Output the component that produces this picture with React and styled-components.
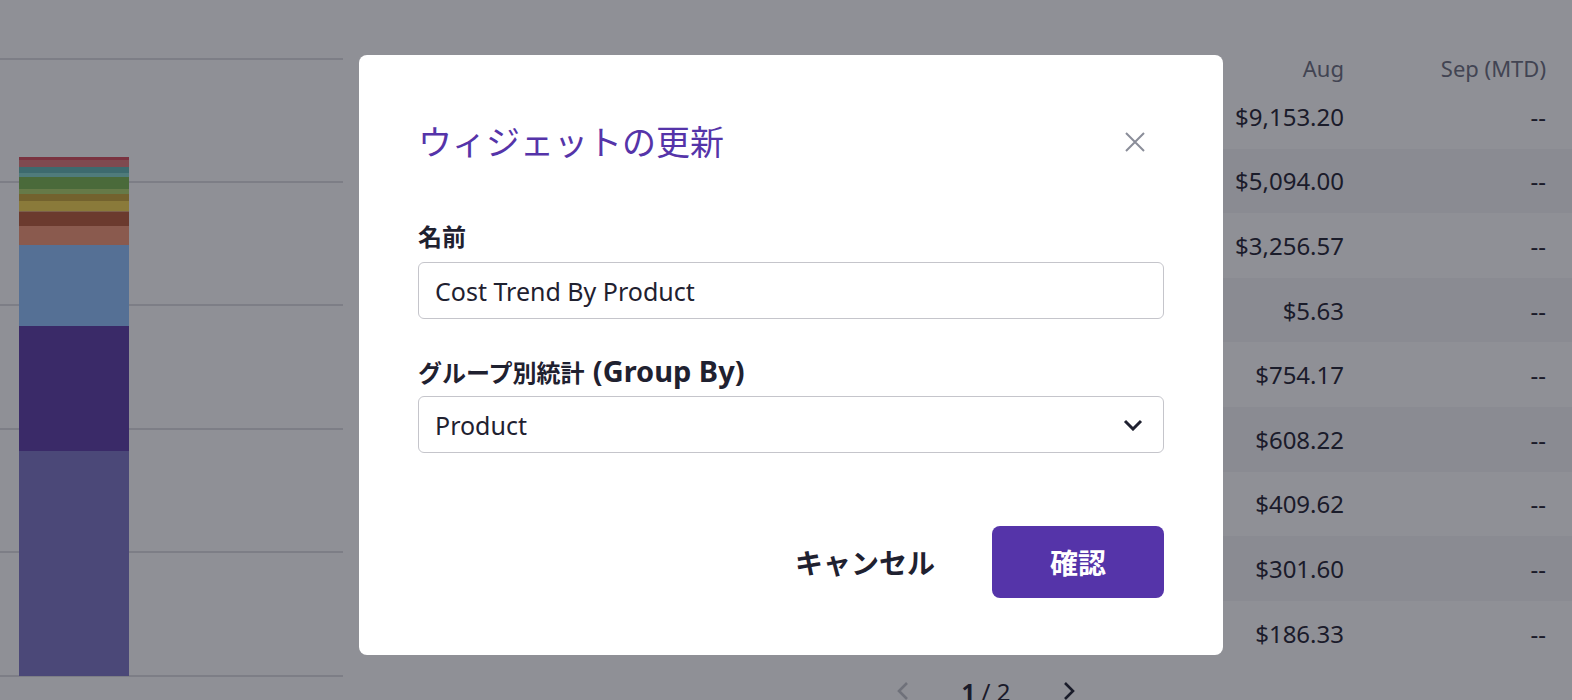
import React from 'react';
import styled, { createGlobalStyle } from 'styled-components';

const GlobalStyle = createGlobalStyle`
  * { box-sizing: border-box; }
  html, body {
    margin: 0;
    padding: 0;
    height: 700px;
    overflow: hidden;
    background: #ffffff;
  }
  body {
    font-family: "Noto Sans", "Noto Sans CJK JP", sans-serif;
    color: #1f2130;
  }
`;

const rows = [
  { product: 'Amazon EC2', jun: '$8,842.11', jul: '$9,010.45', aug: '$9,153.20' },
  { product: 'Amazon RDS', jun: '$4,980.00', jul: '$5,040.00', aug: '$5,094.00' },
  { product: 'Amazon S3', jun: '$3,102.88', jul: '$3,190.04', aug: '$3,256.57' },
  { product: 'AWS Support', jun: '$5.12', jul: '$5.40', aug: '$5.63' },
  { product: 'Amazon CloudFront', jun: '$702.33', jul: '$731.90', aug: '$754.17' },
  { product: 'Elastic Load Balancing', jun: '$590.10', jul: '$601.74', aug: '$608.22' },
  { product: 'Amazon VPC', jun: '$398.20', jul: '$404.51', aug: '$409.62' },
  { product: 'Amazon CloudWatch', jun: '$288.45', jul: '$296.13', aug: '$301.60' },
  { product: 'AWS Lambda', jun: '$170.02', jul: '$180.77', aug: '$186.33' },
];

// stacked bar, y ranges in page pixels
const segments = [
  { y0: 157, y1: 160, color: '#d74d5a' },
  { y0: 160, y1: 167, color: '#e17979' },
  { y0: 167, y1: 173, color: '#62b7b2' },
  { y0: 173, y1: 177, color: '#85d7cb' },
  { y0: 177, y1: 189, color: '#7bb74f' },
  { y0: 189, y1: 194, color: '#b1d56a' },
  { y0: 194, y1: 201, color: '#caa738' },
  { y0: 201, y1: 211.5, color: '#f6d54f' },
  { y0: 211.5, y1: 226, color: '#ba5b38' },
  { y0: 226, y1: 245, color: '#f69875' },
  { y0: 245, y1: 326, color: '#90c2fd' },
  { y0: 326, y1: 451, color: '#5d3ca7' },
  { y0: 451, y1: 676, color: '#7d76c5' },
];

const gridLines = [59, 182, 305, 429, 552, 676];

const Page = styled.div`
  display: flex;
  height: 700px;
  overflow: hidden;
`;

const ChartPanel = styled.div`
  width: 400px;
  flex-shrink: 0;
`;

const TablePanel = styled.div`
  flex: 1;
  display: flex;
  flex-direction: column;
  padding-top: 52px;
`;

const TableRow = styled.div`
  display: grid;
  grid-template-columns: 1fr repeat(4, 202px);
  align-items: center;
  flex-shrink: 0;
  padding-right: 26px;
  height: ${p => (p.$head ? '32px' : '64.6px')};
  background: ${p => (p.$striped ? '#f5f5f8' : 'transparent')};
  font-size: ${p => (p.$head ? '22px' : '24px')};
  color: ${p => (p.$head ? '#6b6e7e' : '#1f2130')};
`;

const Cell = styled.div`
  text-align: ${p => (p.$left ? 'left' : 'right')};
  padding-left: ${p => (p.$left ? '24px' : '0')};
  white-space: nowrap;
`;

const Pager = styled.div`
  display: flex;
  flex-shrink: 0;
  align-items: center;
  justify-content: center;
  height: 40px;
  margin-top: 6px;
  font-size: 24px;
  color: #1f2130;
`;

const PagerArrow = styled.span`
  display: flex;
  width: 12px;
  color: ${p => (p.$disabled ? '#c2c3c9' : '#1f2130')};
`;

const PagerText = styled.span`
  margin: 0 53px;
  b { font-weight: 700; }
`;

const Backdrop = styled.div`
  position: fixed;
  inset: 0;
  background: rgba(20, 22, 35, 0.477);
  display: flex;
  justify-content: center;
  align-items: flex-start;
  padding: 55px 0 0 10px;
`;

const Dialog = styled.div`
  width: 864px;
  background: #ffffff;
  border-radius: 8px;
  padding: 58px 59px 57px;
  display: flex;
  flex-direction: column;
`;

const DialogHeader = styled.div`
  display: flex;
  align-items: center;
  justify-content: space-between;
  height: 58px;
`;

const Title = styled.h2`
  margin: 0;
  font-size: 34px;
  font-weight: 400;
  color: #5534a9;
  line-height: 58px;
`;

const CloseButton = styled.button`
  width: 40px;
  height: 40px;
  margin-right: 9px;
  border: none;
  background: none;
  padding: 0;
  display: flex;
  align-items: center;
  justify-content: center;
  color: #8a8d99;
  cursor: pointer;
`;

const Field = styled.div`
  margin-top: ${p => p.$gap}px;
`;

const Label = styled.label`
  display: block;
  height: 32px;
  font-size: 24px;
  font-weight: 700;
  line-height: 32px;
  margin-bottom: 9px;
  color: #1f2130;
  white-space: nowrap;
`;

const LabelHint = styled.span`
  font-size: 29px;
  margin-left: 2px;
`;

const TextInput = styled.input`
  display: block;
  width: 100%;
  height: 57px;
  border: 1px solid #c5c5cb;
  border-radius: 6px;
  padding: 0 16px;
  font-family: inherit;
  font-size: 25px;
  color: #1f2130;
  outline: none;
`;

const SelectBox = styled.button`
  display: flex;
  width: 100%;
  height: 57px;
  align-items: center;
  justify-content: space-between;
  border: 1px solid #c5c5cb;
  border-radius: 6px;
  padding: 0 20px 0 16px;
  background: #ffffff;
  font-family: inherit;
  font-size: 25px;
  color: #1f2130;
  cursor: pointer;
`;

const Footer = styled.div`
  display: flex;
  justify-content: flex-end;
  gap: 41px;
  margin-top: 73px;
`;

const ActionButton = styled.button`
  width: 172px;
  height: 72px;
  border: none;
  border-radius: 8px;
  font-family: "Noto Sans", "Noto Sans CJK JP", sans-serif;
  font-size: 28px;
  font-weight: 700;
  background: ${p => (p.$primary ? '#5534a9' : 'transparent')};
  color: ${p => (p.$primary ? '#ffffff' : '#1f2130')};
  cursor: pointer;
`;

function CostChart() {
  return (
    <svg width="343" height="700" viewBox="0 0 343 700">
      {gridLines.map(y => (
        <rect key={y} x="0" y={y - 1} width="343" height="2" fill="#dcdde1" />
      ))}
      {segments.map(s => (
        <rect key={s.y0} x="19" y={s.y0} width="110" height={s.y1 - s.y0} fill={s.color} />
      ))}
    </svg>
  );
}

export default function App() {
  return (
    <>
      <GlobalStyle />
      <Page>
        <ChartPanel>
          <CostChart />
        </ChartPanel>
        <TablePanel>
          <TableRow $head>
            <Cell $left>Product</Cell>
            <Cell>Jun</Cell>
            <Cell>Jul</Cell>
            <Cell>Aug</Cell>
            <Cell>Sep (MTD)</Cell>
          </TableRow>
          {rows.map((r, i) => (
            <TableRow key={r.product} $striped={i % 2 === 1}>
              <Cell $left>{r.product}</Cell>
              <Cell>{r.jun}</Cell>
              <Cell>{r.jul}</Cell>
              <Cell>{r.aug}</Cell>
              <Cell>--</Cell>
            </TableRow>
          ))}
          <Pager>
            <PagerArrow $disabled>
              <svg width="12" height="20" viewBox="0 0 12 20">
                <path d="M10 2 2 10l8 8" fill="none" stroke="currentColor" strokeWidth="2.6" />
              </svg>
            </PagerArrow>
            <PagerText><b>1</b> / 2</PagerText>
            <PagerArrow>
              <svg width="12" height="20" viewBox="0 0 12 20">
                <path d="M2 2l8 8-8 8" fill="none" stroke="currentColor" strokeWidth="2.6" />
              </svg>
            </PagerArrow>
          </Pager>
        </TablePanel>
      </Page>

      <Backdrop>
        <Dialog>
          <DialogHeader>
            <Title>ウィジェットの更新</Title>
            <CloseButton aria-label="close">
              <svg width="20" height="20" viewBox="0 0 20 20">
                <path d="M1 1l18 18M19 1 1 19" stroke="currentColor" strokeWidth="2" />
              </svg>
            </CloseButton>
          </DialogHeader>

          <Field $gap={50}>
            <Label>名前</Label>
            <TextInput defaultValue="Cost Trend By Product" />
          </Field>

          <Field $gap={36}>
            <Label>グループ別統計 <LabelHint>(Group By)</LabelHint></Label>
            <SelectBox>
              <span>Product</span>
              <svg width="20" height="12" viewBox="0 0 20 12">
                <path d="M2 2l8 8 8-8" fill="none" stroke="#1f2130" strokeWidth="3" />
              </svg>
            </SelectBox>
          </Field>

          <Footer>
            <ActionButton>キャンセル</ActionButton>
            <ActionButton $primary>確認</ActionButton>
          </Footer>
        </Dialog>
      </Backdrop>
    </>
  );
}
